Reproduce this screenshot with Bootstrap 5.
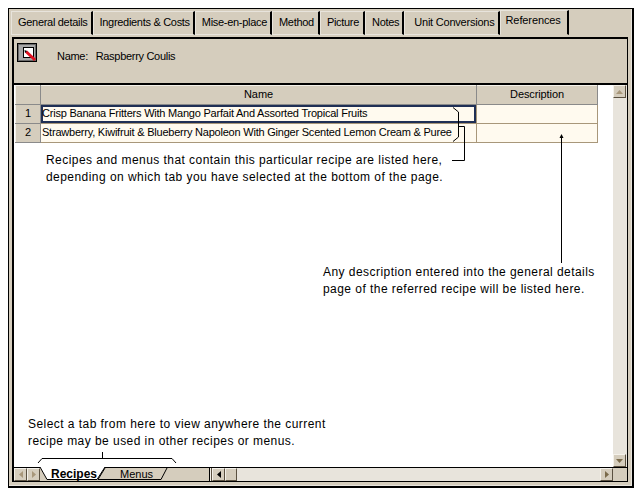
<!DOCTYPE html>
<html lang="en">
<head>
    <meta charset="UTF-8">
    <title>References</title>
    <link href="https://cdn.jsdelivr.net/npm/bootstrap@5.3.0/dist/css/bootstrap.min.css" rel="stylesheet">
    <style>
        html, body { background: #fff; }
        body { font-family: "Liberation Sans", Arial, sans-serif; font-size: 11px; color: #000; overflow: hidden; }
        .app-win { position: relative; width: 626px; height: 480px; margin: 8px 0 0 8px; background: #d5cdbd; border: 1px solid #000; border-right-width: 2px; border-bottom-width: 2px; padding: 1px 4px 4px 2px; display: flex; flex-direction: column; box-shadow: inset -1px -1px 0 #e8e4dc; }
        .tab-strip { height: 27px; flex: none; border: 0; flex-wrap: nowrap; }
        .tab-strip .nav-link { height: 24px; margin: 1px 0 0 0; padding: 3px 3px 0 6px; font-size: 11px; line-height: 15px; color: #000; background: #d5cdbd; border: 0; border-radius: 0; border-left: 1px solid #e8e4dc; border-top: 1px solid #e8e4dc; border-bottom: 1px solid #e8e4dc; border-right: 2px solid #000; white-space: nowrap; letter-spacing: -.3px; }
        .tab-strip .nav-link.roomy-tab { padding-right: 4px; }
        .tab-strip .nav-link.wide-tab { padding-left: 9px; letter-spacing: -.22px; }
        .tab-strip .nav-link.active { height: 25px; margin-top: 0; padding-top: 2px; padding-left: 5px; padding-right: 6px; color: #000; background: #d5cdbd; border-color: #e8e4dc #000 #d5cdbd #e8e4dc; letter-spacing: -.1px; }
        .page-box { flex: 1; min-height: 0; display: flex; flex-direction: column; margin-left: 1px; border-top: 2px solid #000; border-left: 2px solid #000; border-right: 1px solid #000; border-bottom: 1px solid #000; }
        .name-head { height: 46px; flex: none; border-bottom: 2px solid #000; padding: 4px 0 0 3px; gap: 20px; }
        .pick-btn { display: block; width: 20px; height: 20px; flex: none; }
        .name-text { padding-top: 6px; line-height: 14px; letter-spacing: -.3px; }
        .name-text span { margin-left: 5px; }
        .sheet-area { flex: 1; min-height: 0; background: #fff; }
        .grid-wrap { flex: 1; min-width: 0; padding: 0 0 0 1px; }
        .ref-grid { width: 582px; border-collapse: collapse; table-layout: fixed; }
        .ref-grid th, .ref-grid td { height: 19px; padding: 0; font-weight: 400; line-height: 15px; white-space: nowrap; overflow: hidden; font-size: 11px; }
        .ref-grid th { padding-bottom: 2px; background: #d5cdbd; text-align: center; border-right: 1px solid #8a8a8a; border-bottom: 1px solid #8a8a8a; border-left: 1px solid #f4f1ea; border-top: 1px solid #f4f1ea; letter-spacing: -.1px; }
        .ref-grid td { padding-bottom: 1px; padding-left: 1px; background: #fffaef; border: 1px solid #a8977a; border-top: 0; border-left: 0; letter-spacing: -.22px; }
        .ref-grid td.sel-cell { box-shadow: inset 0 0 0 2px #1f2f55; }
        .v-scroll { width: 14px; flex: none; background: #e8e4dc; }
        .scroll-btn { width: 13px; height: 13px; flex: none; background: #d5cdbd; border: 1px solid; border-color: #f4f1ea #5a5040 #5a5040 #f4f1ea; display: flex; align-items: center; justify-content: center; }
        .scroll-btn svg { display: block; }
        .foot-bar { height: 14px; flex: none; background: #d5cdbd; border-top: 1px solid #000; }
        .sheet-side { width: 195px; flex: none; }
        .sheet-tabs { display: block; width: 140px; height: 14px; flex: none; margin-top: -1px; }
        .sheet-tabs text { font-family: "Liberation Sans", Arial, sans-serif; font-size: 12px; }
        .split-bar { width: 3px; flex: none; border-left: 1px solid #000; border-right: 1px solid #5a5040; background: #f4f1ea; }
        .h-scroll { flex: 1; background: #e8e4dc; min-width: 0; }
        .h-thumb { width: 12px; flex: none; background: #d5cdbd; border: 1px solid; border-color: #f4f1ea #5a5040 #5a5040 #f4f1ea; }
        .corner-box { width: 14px; flex: none; background: #d5cdbd; }
        .callout { position: absolute; font-size: 12px; line-height: 17px; white-space: nowrap; letter-spacing: .45px; }
        .callout-lines { position: absolute; left: -9px; top: -9px; width: 642px; height: 496px; pointer-events: none; }
    </style>
</head>
<body>
    <div class="app-win">
        <!-- tabs along the top -->
        <ul class="nav nav-tabs tab-strip">
            <li class="nav-item"><a class="nav-link" href="#">General details</a></li>
            <li class="nav-item"><a class="nav-link" href="#">Ingredients &amp; Costs</a></li>
            <li class="nav-item"><a class="nav-link" href="#">Mise-en-place</a></li>
            <li class="nav-item"><a class="nav-link roomy-tab" href="#">Method</a></li>
            <li class="nav-item"><a class="nav-link roomy-tab" href="#">Picture</a></li>
            <li class="nav-item"><a class="nav-link" href="#">Notes</a></li>
            <li class="nav-item"><a class="nav-link wide-tab" href="#">Unit Conversions</a></li>
            <li class="nav-item"><a class="nav-link active" href="#">References</a></li>
        </ul>

        <div class="page-box">
            <div class="name-head d-flex">
                <svg class="pick-btn" viewBox="0 0 20 20">
                    <rect x="0.5" y="0.5" width="19" height="18" fill="#a8a8a8" stroke="#000"/>
                    <rect x="1.5" y="1.5" width="17" height="16" fill="none" stroke="#6a6a6a"/>
                    <rect x="6.5" y="4.5" width="10" height="10" fill="#fff" stroke="#000"/>
                    <path d="M9 8.5 L18 17" stroke="#e01020" stroke-width="3"/>
                    <path d="M7.5 7 L10 8 L8 10 Z" fill="#000"/>
                </svg>
                <div class="name-text">Name: <span>Raspberry Coulis</span></div>
            </div>

            <div class="sheet-area d-flex">
                <div class="grid-wrap">
                    <table class="ref-grid">
                        <colgroup><col style="width:25px"><col style="width:436px"><col style="width:121px"></colgroup>
                        <thead>
                            <tr><th></th><th>Name</th><th>Description</th></tr>
                        </thead>
                        <tbody>
                            <tr>
                                <th>1</th>
                                <td class="sel-cell">Crisp Banana Fritters With Mango Parfait And Assorted Tropical Fruits</td>
                                <td></td>
                            </tr>
                            <tr>
                                <th>2</th>
                                <td>Strawberry, Kiwifruit &amp; Blueberry Napoleon With Ginger Scented Lemon Cream &amp; Puree</td>
                                <td></td>
                            </tr>
                        </tbody>
                    </table>
                </div>
                <div class="v-scroll d-flex flex-column justify-content-between">
                    <div class="scroll-btn"><svg width="7" height="4"><path d="M3.5 0 L7 4 H0 Z" fill="#a8977a"/></svg></div>
                    <div class="scroll-btn"><svg width="7" height="4"><path d="M3.5 4 L7 0 H0 Z" fill="#7a6a4a"/></svg></div>
                </div>
            </div>

            <div class="foot-bar d-flex">
                <div class="sheet-side d-flex">
                    <div class="scroll-btn"><svg width="4" height="7"><path d="M0 3.5 L4 0 V7 Z" fill="#a8977a"/></svg></div>
                    <div class="scroll-btn"><svg width="4" height="7"><path d="M4 3.5 L0 0 V7 Z" fill="#a8977a"/></svg></div>
                    <svg class="sheet-tabs" viewBox="0 0 140 14">
                        <path d="M65 1 L58 12.5 H121 L127 1" fill="#d5cdbd" stroke="#000"/>
                        <path d="M0 0 L7 12.5 H57 L65 0 Z" fill="#fff"/>
                        <path d="M0 0 L7 12.5 H57 L65 0" fill="none" stroke="#000"/>
                        <text x="11" y="11" font-weight="700">Recipes</text>
                        <text x="80" y="11" style="font-size:11px">Menus</text>
                    </svg>
                </div>
                <div class="split-bar"></div>
                <div class="scroll-btn"><svg width="4" height="7"><path d="M0 3.5 L4 0 V7 Z" fill="#000"/></svg></div>
                <div class="h-thumb"></div>
                <div class="h-scroll"></div>
                <div class="scroll-btn"><svg width="4" height="7"><path d="M4 3.5 L0 0 V7 Z" fill="#7a6a4a"/></svg></div>
                <div class="corner-box"></div>
            </div>
        </div>

        <!-- notes laid over the sheet -->
        <svg class="callout-lines" viewBox="0 0 642 496" fill="none" stroke="#000">
            <path d="M453 107.5 L458.5 112 V137 L453 141.5"/>
            <path d="M458 126.5 H464.5 V160.5 H452"/>
            <path d="M561.5 137 V263"/>
            <path d="M561.5 134 L559.5 138 H563.5 Z" fill="#000" stroke="none"/>
            <path d="M38 463 L42 458.5 H172 L176 463"/>
            <path d="M102.5 452 V458"/>
        </svg>
        <div class="callout" style="left:37px;top:143px">Recipes and menus that contain this particular recipe are listed here,<br>depending on which tab you have selected at the bottom of the page.</div>
        <div class="callout" style="left:314px;top:255px">Any description entered into the general details<br>page of the referred recipe will be listed here.</div>
        <div class="callout" style="left:19px;top:407px">Select a tab from here to view anywhere the current<br>recipe may be used in other recipes or menus.</div>
    </div>
    <script src="https://cdn.jsdelivr.net/npm/bootstrap@5.3.0/dist/js/bootstrap.bundle.min.js"></script>
</body>
</html>
